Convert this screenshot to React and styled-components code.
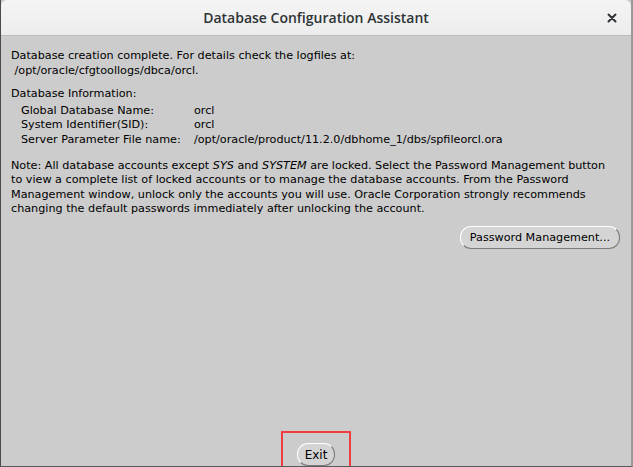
import React from "react";
import styled, { createGlobalStyle } from "styled-components";

const GlobalStyle = createGlobalStyle`
  html, body {
    margin: 0;
    padding: 0;
    background: #cccccc;
  }
  #root {
    width: 633px;
    height: 467px;
  }
`;

const App = () => {
  return (
    <>
      <GlobalStyle />
      <Window>
        <TitleBar>
          <Title>Database Configuration Assistant</Title>
          <CloseButton aria-label="close">
            <svg width="10" height="10" viewBox="0 0 10 10">
              <path d="M1.5 1.5 L8.5 8.5 M8.5 1.5 L1.5 8.5" stroke="#2e3436" strokeWidth="2" strokeLinecap="round" />
            </svg>
          </CloseButton>
        </TitleBar>
        <Body>
          <Paragraph $gap="9px">
            <Line>Database creation complete. For details check the logfiles at:</Line>
            <Line>&nbsp;/opt/oracle/cfgtoollogs/dbca/orcl.</Line>
          </Paragraph>
          <Paragraph $gap="11px">
            <Line>Database Information:</Line>
            <InfoTable>
              <InfoLabel>Global Database Name:</InfoLabel>
              <InfoValue>orcl</InfoValue>
              <InfoLabel>System Identifier(SID):</InfoLabel>
              <InfoValue>orcl</InfoValue>
              <InfoLabel>Server Parameter File name:</InfoLabel>
              <InfoValue>/opt/oracle/product/11.2.0/dbhome_1/dbs/spfileorcl.ora</InfoValue>
            </InfoTable>
          </Paragraph>
          <Paragraph $gap="9px">
            <Line>Note: All database accounts except <i>SYS</i> and <i>SYSTEM</i> are locked. Select the Password Management button</Line>
            <Line>to view a complete list of locked accounts or to manage the database accounts. From the Password</Line>
            <Line>Management window, unlock only the accounts you will use. Oracle Corporation strongly recommends</Line>
            <Line>changing the default passwords immediately after unlocking the account.</Line>
          </Paragraph>
          <ButtonRow>
            <PillButton>Password Management...</PillButton>
          </ButtonRow>
          <Footer>
            <Highlight>
              <PillButton $compact>Exit</PillButton>
            </Highlight>
          </Footer>
        </Body>
        <Peek $side="left" />
        <Peek $side="right" />
      </Window>
    </>
  );
};

const Window = styled.div`
  position: relative;
  display: flex;
  flex-direction: column;
  width: 633px;
  height: 467px;
  box-sizing: border-box;
  background: #cccccc;
  border-left: 1px solid #4a4a4a;
  border-right: 2px solid #9a9a9a;
  border-bottom: 1px solid #5a5a5a;
  overflow: hidden;
`;

const TitleBar = styled.div`
  position: relative;
  display: flex;
  align-items: center;
  justify-content: center;
  height: 36px;
  flex-shrink: 0;
  box-sizing: border-box;
  background: linear-gradient(#f4f4f4, #ededed);
  border-bottom: 1px solid #bdbdbd;
  border-top-left-radius: 6px;
  border-top-right-radius: 6px;
`;

const Title = styled.span`
  font-family: "Open Sans", "DejaVu Sans", sans-serif;
  font-size: 14px;
  font-weight: 600;
  color: #2e3436;
`;

const CloseButton = styled.span`
  position: absolute;
  right: 14px;
  top: 13px;
  display: flex;
`;

const Body = styled.div`
  display: flex;
  flex-direction: column;
  flex: 1;
  padding: 13px 11px 0 10px;
  font-family: "DejaVu Sans", sans-serif;
  font-size: 11.2px;
  color: #000;
`;

const Paragraph = styled.div`
  display: flex;
  flex-direction: column;
  margin-bottom: ${(p) => p.$gap};
`;

const Line = styled.div`
  line-height: 14.6px;
  white-space: nowrap;
`;

const InfoTable = styled.div`
  display: grid;
  grid-template-columns: 173px auto;
  padding-left: 10px;
  margin-top: 2px;
  line-height: 14.6px;
  white-space: nowrap;
`;

const InfoLabel = styled.span``;

const InfoValue = styled.span``;

const ButtonRow = styled.div`
  display: flex;
  justify-content: flex-end;
  margin-top: 0;
`;

const PillButton = styled.button`
  font-family: "DejaVu Sans", sans-serif;
  font-size: ${(p) => (p.$compact ? "12px" : "11.2px")};
  color: #000;
  height: 23px;
  padding: ${(p) => (p.$compact ? "0 7px" : "0 9px")};
  background: #d4d4d4;
  border: 1px solid;
  border-color: #ffffff #7a7a7a #7a7a7a #ffffff;
  border-radius: 11px;
  cursor: pointer;
`;

const Footer = styled.div`
  margin-top: auto;
  display: flex;
  justify-content: center;
`;

const Highlight = styled.div`
  display: flex;
  justify-content: center;
  padding: 10px 14px 0;
  border: 2px solid #f03c3c;
  border-bottom: none;
  margin-left: 1px;
`;

const Peek = styled.div`
  position: absolute;
  top: 363px;
  ${(p) => (p.$side === "left" ? "left: -1px;" : "right: -2px;")}
  width: ${(p) => (p.$side === "left" ? "1px" : "2px")};
  height: 15px;
  background: #0000e0;
`;

export default App;
